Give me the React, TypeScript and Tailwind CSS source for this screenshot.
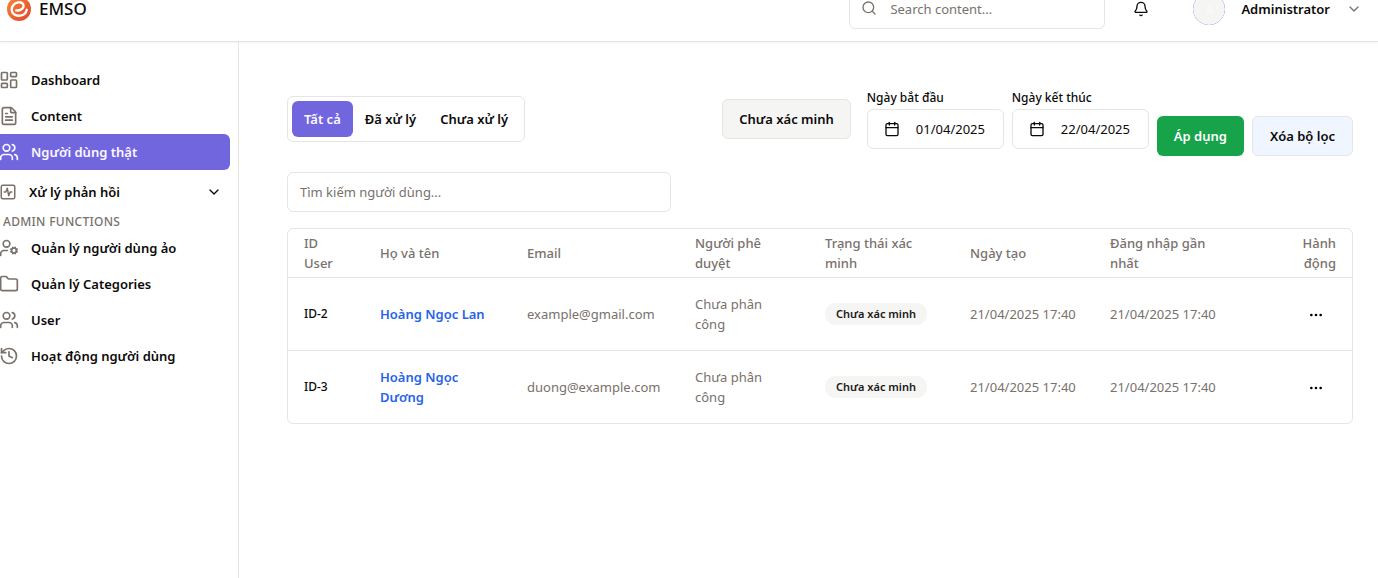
import {
  Bell,
  Calendar,
  ChevronDown,
  Ellipsis,
  FileText,
  Folder,
  History,
  LayoutDashboard,
  Search,
  SquareActivity,
  UserCog,
  Users,
  type LucideIcon,
} from "lucide-react";

function Logo() {
  return (
    <svg width="24" height="24" viewBox="0 0 24 24" aria-hidden="true">
      <defs>
        <linearGradient id="logo-fill" x1="0" y1="0" x2="1" y2="1">
          <stop offset="0" stopColor="#f5883a" />
          <stop offset="1" stopColor="#e5432a" />
        </linearGradient>
      </defs>
      <circle cx="12" cy="12" r="12" fill="url(#logo-fill)" />
      <path
        d="M9.200 13.400c3.200.4 6.800-1.200 7.400-3.800.6-2.700-2.300-4.700-5.500-4.200-3.900.6-6.600 3.800-6.400 7.300.2 3.900 3.600 6.300 7.500 6.100 3.900-.2 6.800-2.500 7.600-6"
        fill="none"
        stroke="#fff"
        strokeWidth="2.400"
        strokeLinecap="round"
        strokeLinejoin="round"
      />
    </svg>
  );
}

type NavItem = { label: string; icon: LucideIcon; active?: boolean };

const mainNav: NavItem[] = [
  { label: "Dashboard", icon: LayoutDashboard },
  { label: "Content", icon: FileText },
  { label: "Người dùng thật", icon: Users, active: true },
];

const adminNav: NavItem[] = [
  { label: "Quản lý người dùng ảo", icon: UserCog },
  { label: "Quản lý Categories", icon: Folder },
  { label: "User", icon: Users },
  { label: "Hoạt động người dùng", icon: History },
];

function NavLink({ label, icon: Icon, active }: NavItem) {
  return (
    <a
      href="#"
      aria-current={active ? "page" : undefined}
      className={
        active
          ? "flex h-9 items-center gap-3 rounded-md bg-[#7266df] px-3 text-[#faf9ff]"
          : "flex h-9 items-center gap-3 rounded-md px-3"
      }
    >
      <Icon size={20} className={active ? "" : "text-[#78716c]"} />
      {label}
    </a>
  );
}

const rows = [
  { id: "ID-2", name: "Hoàng Ngọc Lan", email: "example@gmail.com" },
  { id: "ID-3", name: "Hoàng Ngọc Dương", email: "duong@example.com" },
];

const columns = [
  { label: "ID User", width: "w-[76px]" },
  { label: "Họ và tên", width: "w-[147px]" },
  { label: "Email", width: "w-[168px]" },
  { label: "Người phê duyệt", width: "w-[130px]" },
  { label: "Trạng thái xác minh", width: "w-[145px]" },
  { label: "Ngày tạo", width: "w-[140px]" },
  { label: "Đăng nhập gần nhất", width: "w-[150px]" },
];

function DateField({ id, label, value }: { id: string; label: string; value: string }) {
  return (
    <div className="flex flex-col gap-[3px]">
      <label htmlFor={id} className="text-xs leading-4 font-medium">
        {label}
      </label>
      <button
        id={id}
        type="button"
        className="flex h-10 min-w-[137px] items-center gap-4 rounded-md border border-[#e5e5e5] px-4 whitespace-nowrap"
      >
        <Calendar size={16} />
        {value}
      </button>
    </div>
  );
}

export default function App() {
  return (
    <div className="flex min-h-screen flex-col overflow-hidden bg-white font-['Noto_Sans',sans-serif] text-[13px] leading-5 text-[#0c0a09]">
      <header className="-mt-[23px] flex h-[65px] shrink-0 items-center border-b border-[#e5e5e5] pr-4 pl-[7px] shadow-xs">
        <div className="flex flex-1 items-center gap-2 text-[17px] leading-4 font-medium">
          <Logo />
          EMSO
        </div>
        <div className="relative">
          <Search size={16} className="absolute top-[11px] left-3 text-[#78716c]" />
          <input
            type="search"
            aria-label="Search content"
            placeholder="Search content..."
            className="h-10 w-64 rounded-md border border-[#e5e5e5] pr-3 pl-10 placeholder:text-[#78716c]"
          />
        </div>
        <button type="button" aria-label="Notifications" className="ml-7 p-0">
          <Bell size={16} />
        </button>
        <button type="button" className="ml-11 flex items-center gap-4 font-semibold">
          <span className="flex size-8 overflow-hidden rounded-full bg-[#7266df]">
            <span className="flex size-full items-center justify-center rounded-full bg-[#f5f5f4] text-[#faf9ff]">
              A
            </span>
          </span>
          Administrator
          <ChevronDown size={16} className="text-[#78716c]" />
        </button>
      </header>

      <div className="flex flex-1">
        <aside className="-ml-[21px] w-[260px] shrink-0 border-r border-[#e5e5e5] px-2 pt-5 font-semibold">
          <nav>
            {mainNav.map((item) => (
              <NavLink key={item.label} {...item} />
            ))}
            <button type="button" className="flex h-11 w-full items-center gap-3 pr-2 pl-3">
              <SquareActivity size={18} className="text-[#78716c]" />
              <span className="flex-1 text-left">Xử lý phản hồi</span>
              <ChevronDown size={16} />
            </button>
            <h2 className="px-4 text-xs leading-4 font-medium tracking-wide text-[#78716c]">
              ADMIN FUNCTIONS
            </h2>
            {adminNav.map((item) => (
              <NavLink key={item.label} {...item} />
            ))}
          </nav>
        </aside>

        <main className="min-w-0 flex-1 pt-12 pr-[25px] pl-12">
          <div className="flex items-start justify-between">
            <div className="mt-1.5 flex rounded-md border border-[#e5e5e5] p-1 font-semibold">
              <button type="button" className="h-9 rounded-md bg-[#7266df] px-3 text-[#faf9ff]">
                Tất cả
              </button>
              <button type="button" className="h-9 px-3">
                Đã xử lý
              </button>
              <button type="button" className="h-9 px-3">
                Chưa xử lý
              </button>
            </div>
            <div className="flex items-end gap-2">
              <button
                type="button"
                className="mr-2 mb-[17px] h-10 rounded-md border border-[#e5e5e5] bg-[#f5f5f4] px-4 font-semibold"
              >
                Chưa xác minh
              </button>
              <div className="mb-[7px] flex gap-2">
                <DateField id="start" label="Ngày bắt đầu" value="01/04/2025" />
                <DateField id="end" label="Ngày kết thúc" value="22/04/2025" />
              </div>
              <button type="button" className="h-10 rounded-md bg-[#16a34a] px-[17px] font-semibold text-white">
                Áp dụng
              </button>
              <button
                type="button"
                className="h-10 rounded-md border border-[#e5e5e5] bg-[#eff6ff] px-[17px] font-semibold"
              >
                Xóa bộ lọc
              </button>
            </div>
          </div>

          <input
            type="text"
            aria-label="Tìm kiếm người dùng"
            placeholder="Tìm kiếm người dùng..."
            className="mt-4 block h-10 w-96 rounded-md border border-[#e5e5e5] px-3 placeholder:text-[#78716c]"
          />

          <div className="mt-4 rounded-md border border-[#e5e5e5]">
            <table className="w-full table-fixed text-left text-[#78716c]">
              <thead>
                <tr className="h-12 border-b border-[#e5e5e5]">
                  {columns.map((column) => (
                    <th key={column.label} className={`px-4 font-medium ${column.width}`}>
                      {column.label}
                    </th>
                  ))}
                  <th className="pr-4 pl-10 text-right font-medium">Hành động</th>
                </tr>
              </thead>
              <tbody>
                {rows.map((row) => (
                  <tr key={row.id} className="h-[73px] border-b border-[#e5e5e5] last:border-b-0">
                    <td className="px-4 text-xs font-medium text-[#0c0a09]">{row.id}</td>
                    <td className="px-4 font-semibold">
                      <a href="#" className="text-[#2563eb]">
                        {row.name}
                      </a>
                    </td>
                    <td className="px-4">{row.email}</td>
                    <td className="px-4">Chưa phân công</td>
                    <td className="px-4">
                      <span className="inline-flex h-[22px] items-center rounded-full bg-[#f5f5f4] px-[11px] align-middle text-[11px] font-semibold whitespace-nowrap text-[#1c1917]">
                        Chưa xác minh
                      </span>
                    </td>
                    <td className="px-4 whitespace-nowrap">21/04/2025 17:40</td>
                    <td className="px-4 whitespace-nowrap">21/04/2025 17:40</td>
                    <td className="px-4 text-right">
                      <button type="button" aria-label="Hành động" className="px-3 align-middle text-black">
                        <Ellipsis size={16} />
                      </button>
                    </td>
                  </tr>
                ))}
              </tbody>
            </table>
          </div>
        </main>
      </div>
    </div>
  );
}
